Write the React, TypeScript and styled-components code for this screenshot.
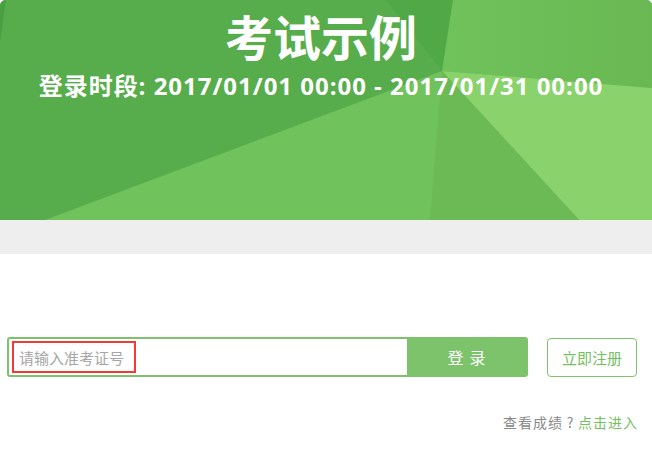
import React from 'react';
import styled, { createGlobalStyle } from 'styled-components';

const theme = {
  green: '#7dc36b',
  greenText: '#74c05f',
  gray: '#888888',
  band: '#eeeeee',
  red: '#f33a3a',
  white: '#ffffff',
};

const GlobalStyle = createGlobalStyle`
  html, body {
    margin: 0;
    padding: 0;
    background: #ffffff;
  }
  body {
    font-family: 'Noto Sans CJK SC', 'Open Sans', sans-serif;
  }
  * {
    box-sizing: border-box;
  }
`;

const Page = styled.div`
  width: 652px;
  height: 455px;
  background: ${theme.white};
  overflow: hidden;
`;

const Banner = styled.header`
  position: relative;
  height: 220px;
  padding-right: 10px;
  border-radius: 6px 6px 0 0;
  overflow: hidden;
  background: #57ad4b;
  display: flex;
  flex-direction: column;
  align-items: center;
  color: ${theme.white};
`;

const Backdrop = styled.svg`
  position: absolute;
  inset: 0;
  width: 100%;
  height: 100%;
`;

const Title = styled.h1`
  position: relative;
  margin: 0;
  font-family: 'Noto Sans CJK SC', sans-serif;
  font-size: 48px;
  font-weight: 700;
  line-height: 70px;
`;

const Period = styled.p`
  position: relative;
  margin: 1px 0 0;
  font-family: 'Open Sans', 'Noto Sans CJK SC', sans-serif;
  font-size: 24px;
  font-weight: 700;
  line-height: 30px;
  letter-spacing: 0.98px;
  white-space: nowrap;
`;

const Band = styled.div`
  height: 34px;
  background: ${theme.band};
`;

const Main = styled.main`
  padding: 83px 15px 0 7px;
`;

const LoginRow = styled.div`
  display: flex;
  align-items: center;
`;

const InputGroup = styled.div`
  display: flex;
  width: 521px;
  height: 40px;
  border: 2px solid ${theme.green};
  border-radius: 3px;
  overflow: hidden;
`;

const Field = styled.div`
  flex: 1;
  display: flex;
  align-items: center;
  padding-left: 3px;
  background: ${theme.white};
`;

const TicketInput = styled.input`
  width: 124px;
  height: 32px;
  padding: 0 5px;
  border: 2px solid ${theme.red};
  outline: none;
  font-family: 'Noto Sans CJK SC', sans-serif;
  font-size: 15px;
  color: #333;

  &::placeholder {
    color: #a6a6a6;
  }
`;

const LoginButton = styled.button`
  width: 119px;
  border: none;
  background: ${theme.green};
  color: ${theme.white};
  font-family: 'Noto Sans CJK SC', sans-serif;
  font-size: 16px;
  letter-spacing: 6px;
  padding: 0 0 0 6px;
  cursor: pointer;
`;

const RegisterButton = styled.button`
  margin-left: 19px;
  width: 90px;
  height: 39px;
  border: 1px solid ${theme.green};
  border-radius: 4px;
  background: ${theme.white};
  color: ${theme.greenText};
  font-family: 'Noto Sans CJK SC', sans-serif;
  font-size: 15px;
  padding: 0;
  cursor: pointer;
`;

const ScoreLine = styled.p`
  margin: 35px -1px 0 0;
  text-align: right;
  font-size: 14px;
  line-height: 20px;
  letter-spacing: 1px;
  color: ${theme.gray};
`;

const Ask = styled.span`
  display: inline-block;
  width: 15px;
  text-align: center;
`;

const ScoreLink = styled.a`
  color: ${theme.greenText};
  text-decoration: none;
`;

const BannerBackdrop = () => (
  <Backdrop viewBox="0 0 652 220" preserveAspectRatio="none">
    <defs>
      <linearGradient id="topRight" x1="0" y1="0" x2="1" y2="0">
        <stop offset="0" stopColor="#70c25b" />
        <stop offset="1" stopColor="#69b853" />
      </linearGradient>
    </defs>
    <rect width="652" height="220" fill="#57ad4b" />
    <polygon points="0,0 6,0 0,42" fill="#4a9f40" />
    <polygon points="386,0 453,0 442,71" fill="#50a846" />
    <polygon points="453,0 652,0 652,88 442,71" fill="url(#topRight)" />
    <polygon points="442,71 652,88 652,220 579,220" fill="#8ad26b" />
    <polygon points="442,71 579,220 45,220" fill="#70c25c" />
    <polygon points="442,71 579,220 430,220" fill="#6bba55" />
  </Backdrop>
);

const App = () => {
  return (
    <Page>
      <GlobalStyle />
      <Banner>
        <BannerBackdrop />
        <Title>考试示例</Title>
        <Period>登录时段: 2017/01/01 00:00 - 2017/01/31 00:00</Period>
      </Banner>
      <Band />
      <Main>
        <LoginRow>
          <InputGroup>
            <Field>
              <TicketInput placeholder="请输入准考证号" />
            </Field>
            <LoginButton>登录</LoginButton>
          </InputGroup>
          <RegisterButton>立即注册</RegisterButton>
        </LoginRow>
        <ScoreLine>
          查看成绩<Ask>?</Ask>
          <ScoreLink href="#">点击进入</ScoreLink>
        </ScoreLine>
      </Main>
    </Page>
  );
};

export default App;
